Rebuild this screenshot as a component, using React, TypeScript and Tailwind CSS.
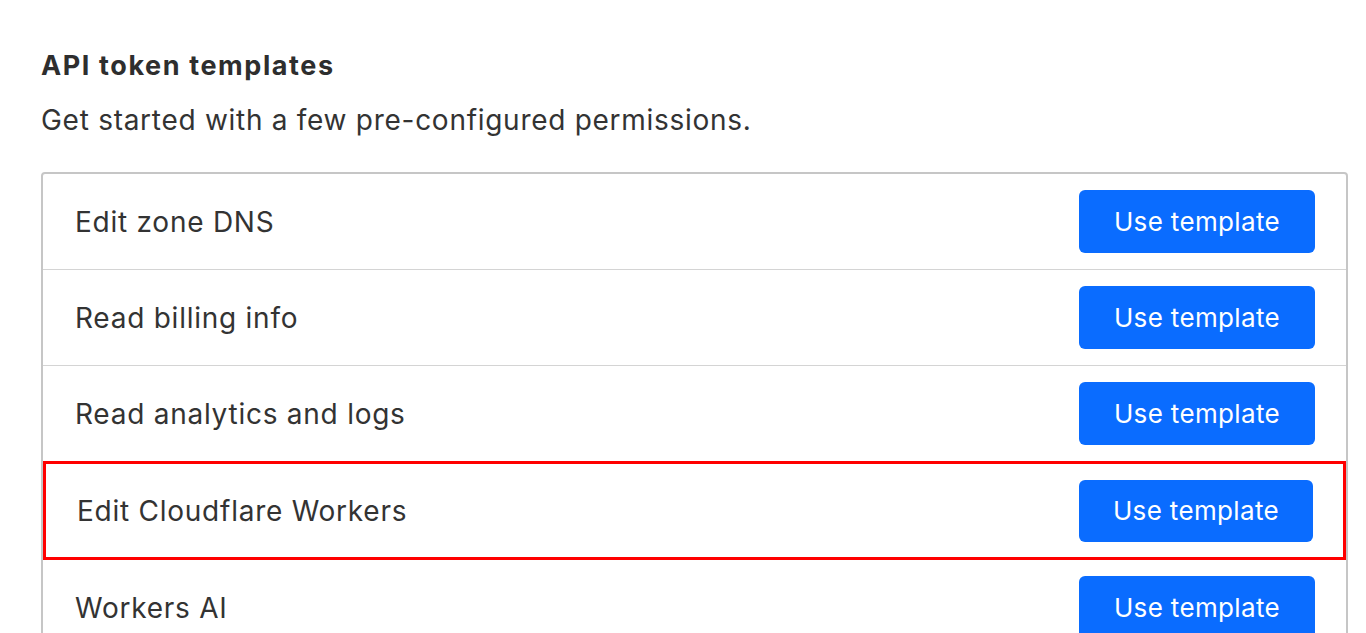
const templates = [
  'Edit zone DNS',
  'Read billing info',
  'Read analytics and logs',
  'Edit Cloudflare Workers',
  'Workers AI',
];

function TemplateRow({ name, highlighted }: { name: string; highlighted?: boolean }) {
  return (
    <div
      className={`flex items-center justify-between ${
        highlighted
          ? 'border-[3px] border-[#ff0000] pl-[31px] pr-[30px] -mt-px h-[99px]'
          : 'border-b border-[#d4d4d4] pl-[32px] pr-[31px] h-[96px]'
      }`}
    >
      <span className="text-[28px] tracking-[0.75px] text-[#333333]">{name}</span>
      <button
        className={`${
          highlighted ? 'w-[234px] h-[62px]' : 'w-[236px] h-[63px]'
        } rounded-[6px] bg-[#0a6cff] text-white text-[26px] tracking-[0.35px]`}
      >
        Use template
      </button>
    </div>
  );
}

export default function App() {
  return (
    <div
      className="h-screen overflow-hidden bg-white pl-[41px] pr-[18px] pt-[44px]"
      style={{ fontFamily: 'Inter, "Noto Sans", sans-serif' }}
    >
      <h2 className="text-[27px] font-bold tracking-[1.6px] text-[#2e2e2e] leading-[44px]">API token templates</h2>
      <p className="text-[28px] tracking-[0.72px] text-[#333333] leading-[40px] mt-[12px]">
        Get started with a few pre-configured permissions.
      </p>
      <div className="mt-[32px] border-2 border-[#c6c6c6] rounded-t-[4px]">
        {templates.map((t) => (
          <TemplateRow key={t} name={t} highlighted={t === 'Edit Cloudflare Workers'} />
        ))}
      </div>
    </div>
  );
}
